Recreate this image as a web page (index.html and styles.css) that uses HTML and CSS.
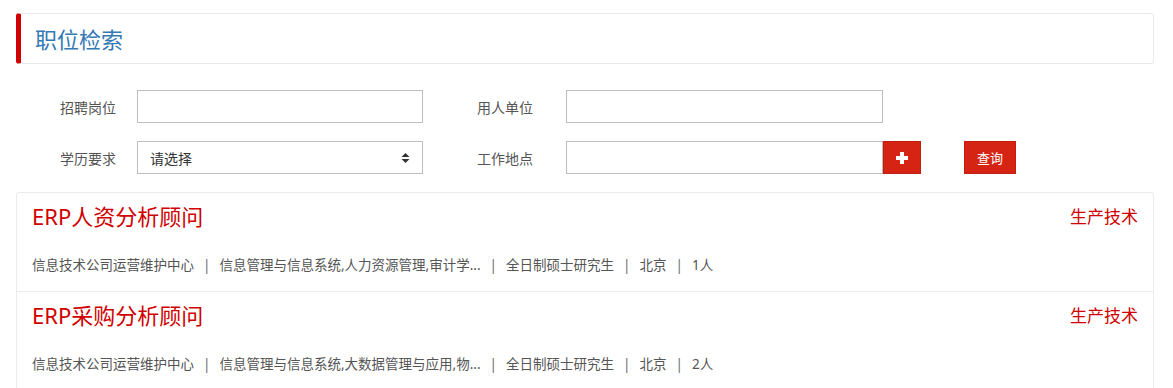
FILE: index.html
```html
<!DOCTYPE html>
<html lang="zh-CN">
<head>
    <meta charset="UTF-8">
    <title>职位检索</title>
    <link rel="stylesheet" href="styles.css">
</head>
<body>
    <div class="page">
        <div class="panel-head">
            <h2>职位检索</h2>
        </div>

        <form class="search">
            <div class="row">
                <label class="lbl lbl-a">招聘岗位</label>
                <input type="text" class="field field-a">
                <label class="lbl lbl-b">用人单位</label>
                <input type="text" class="field field-b">
            </div>
            <div class="row">
                <label class="lbl lbl-a">学历要求</label>
                <div class="select field-a">
                    <span>请选择</span>
                    <svg width="9" height="12" viewBox="0 0 9 12"><path d="M4.5 1 L8.5 5 H0.5 Z M4.5 11 L8.5 7 H0.5 Z" fill="#333"/></svg>
                </div>
                <label class="lbl lbl-b">工作地点</label>
                <input type="text" class="field field-b">
                <button type="button" class="btn-plus">
                    <svg width="12" height="12" viewBox="0 0 12 12"><path d="M4 0 H8 V4 H12 V8 H8 V12 H4 V8 H0 V4 H4 Z" fill="#fff"/></svg>
                </button>
                <button type="button" class="btn-query">查询</button>
            </div>
        </form>

        <div class="jobs">
            <div class="job">
                <div class="job-top">
                    <a class="job-title">ERP人资分析顾问</a>
                    <span class="job-cat">生产技术</span>
                </div>
                <div class="job-meta">
                    信息技术公司运营维护中心<span class="sep">|</span>信息管理与信息系统,人力资源管理,审计学...<span class="sep">|</span>全日制硕士研究生<span class="sep">|</span>北京<span class="sep">|</span>1人
                </div>
            </div>
            <div class="job">
                <div class="job-top">
                    <a class="job-title">ERP采购分析顾问</a>
                    <span class="job-cat">生产技术</span>
                </div>
                <div class="job-meta">
                    信息技术公司运营维护中心<span class="sep">|</span>信息管理与信息系统,大数据管理与应用,物...<span class="sep">|</span>全日制硕士研究生<span class="sep">|</span>北京<span class="sep">|</span>2人
                </div>
            </div>
        </div>
    </div>
</body>
</html>
```

FILE: styles.css
```css
body {
    margin: 0;
    background: #fff;
    font-family: "Noto Sans", "Noto Sans CJK SC", sans-serif;
    color: #555;
}

.page {
    width: 1138px;
    padding: 13px 0 0 16px;
}

.panel-head {
    height: 49px;
    border: 1px solid #e9e9e9;
    border-left: 5px solid #d00000;
    border-radius: 3px;
    display: flex;
    align-items: center;
}

.panel-head h2 {
    margin: 0 0 2px 14px;
    font-size: 22px;
    font-weight: normal;
    color: #3479b4;
}

.search {
    padding-top: 26px;
}

.row {
    display: flex;
    align-items: center;
    height: 33px;
    margin-bottom: 18px;
}

.lbl {
    font-size: 14px;
    color: #555;
    text-align: right;
    box-sizing: border-box;
}

.lbl-a {
    width: 121px;
    padding-right: 21px;
}

.lbl-b {
    width: 143px;
    padding-right: 33px;
}

.field {
    box-sizing: border-box;
    height: 33px;
    border: 1px solid #bdbdbd;
    margin: 0;
    padding: 0 10px;
    font-size: 14px;
    outline: none;
}

.field-a {
    width: 286px;
}

.field-b {
    width: 317px;
}

.select {
    box-sizing: border-box;
    height: 33px;
    border: 1px solid #bdbdbd;
    display: flex;
    align-items: center;
    justify-content: space-between;
    padding: 0 12px 0 12px;
    font-size: 14px;
    color: #333;
}

.btn-plus {
    width: 38px;
    height: 33px;
    border: 1px solid #c01e10;
    background: #d62414;
    display: flex;
    align-items: center;
    justify-content: center;
    padding: 0;
}

.btn-query {
    width: 52px;
    height: 33px;
    margin-left: 43px;
    border: 1px solid #c01e10;
    background: #d62414;
    color: #fff;
    font-family: inherit;
    font-size: 13px;
    padding: 0;
}

.jobs {
    border: 1px solid #ececec;
    border-bottom: none;
    border-radius: 3px 3px 0 0;
}

.job {
    padding: 7px 15px 16px 15px;
    border-bottom: 1px solid #ececec;
}

.job-top {
    display: flex;
    justify-content: space-between;
    align-items: center;
    height: 30px;
}

.job-title {
    font-size: 22px;
    color: #d00000;
}

.job-cat {
    font-size: 17px;
    color: #d00000;
}

.job-meta {
    margin-top: 25px;
    line-height: 20px;
    font-size: 13.5px;
    color: #555;
}

.sep {
    margin: 0 9px;
    color: #6b6b6b;
}
```
